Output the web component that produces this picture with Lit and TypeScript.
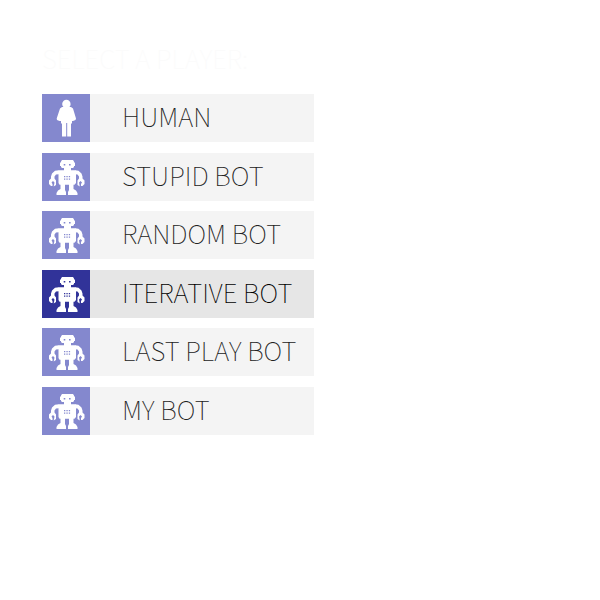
import { LitElement, html, css, svg } from "lit";
import { customElement, state } from "lit/decorators.js";

const human = svg`
  <ellipse cx="24.400" cy="10" rx="4.200" ry="4.300"/>
  <path d="M20 13H29L31 14.500L34 24.500L33.500 26L31 27H30V29.500H29V42.500H25.200V29H24.200V42.500H20V29.500H19V27H17.500L15 26L14.700 24.500L18 14.500Z"/>`;

const robot = svg`
  <path fill-rule="evenodd" d="M20 7H31L32 8.500V9.500H33V13H32V14L31 15H20L19 14V13H18V9.500H19V8.500ZM21.700 11V12.600H23.300V11ZM27 11V12.600H28.600V11Z"/>
  <path d="M22 14H29V18H22Z"/>
  <path fill-rule="evenodd" d="M17 17.200H33L34 18V30L32.500 31.700H17.500L16.500 30V18ZM22 23V24.300H23.300V23ZM24.400 23V24.300H25.700V23ZM26.800 23V24.300H28.100V23ZM22 25.400V26.700H23.300V25.400ZM24.400 25.400V26.700H25.700V25.400ZM26.800 25.400V26.700H28.100V25.400Z"/>
  <path d="M17 17.200L13 17.700L10 20.500L9 23.500V25.500L7 27.500V31L9 33H10.500V31L9.500 29.500L11 28L12.500 29.500L11.700 33.500L14 32V27.500L12.500 25.500V23.500L14 21.500L17 21.200Z"/>
  <path d="M33 17.200L36.500 17.700L39.500 20.500L40.500 23.500V25.500L42.500 27.500V31L40.500 33H39V31L40 29.500L38.500 28L37 29.500L37.800 33.500L35.500 32V27.500L37 25.500V23.500L35.500 21.500L33 21.200Z"/>
  <path d="M18.500 31H23V37L24 39V42H14.500V40L16 37.500L18.500 36ZM27 31H31.500V36L34 37.500L35.500 40V42H26V39L27 37Z"/>`;

interface Player {
  name: string;
  icon: unknown;
}

const players: Player[] = [
  { name: "HUMAN", icon: human },
  { name: "STUPID BOT", icon: robot },
  { name: "RANDOM BOT", icon: robot },
  { name: "ITERATIVE BOT", icon: robot },
  { name: "LAST PLAY BOT", icon: robot },
  { name: "MY BOT", icon: robot },
];

@customElement("app-root")
export class AppRoot extends LitElement {
  @state() private selected = 3;

  static styles = css`
    :host {
      display: block;
      box-sizing: border-box;
      min-height: 100vh;
      padding: 36px 42px;
      background: #fff;
      font-family: "Noto Sans CJK JP", "Noto Sans", sans-serif;
      font-weight: 100;
    }
    .title {
      margin: 0 0 14px;
      font-size: 26px;
      line-height: 44px;
      font-weight: 100;
      color: #fbfbfb;
    }
    .list {
      display: flex;
      flex-direction: column;
      justify-content: space-between;
      max-width: 272px;
      min-height: 341px;
      margin: 0;
      padding: 0;
      list-style: none;
    }
    .player {
      display: flex;
      width: 100%;
      height: 48px;
      padding: 0;
      border: 0;
      background: #f4f4f4;
      color: #222;
      font: inherit;
      font-size: 26px;
      line-height: 44px;
      text-align: left;
      white-space: nowrap;
      cursor: pointer;
    }
    .icon {
      flex: none;
      width: 48px;
      height: 48px;
      background: #8488ce;
      fill: #fff;
    }
    .name {
      padding-left: 32px;
    }
    .player.active {
      background: #e6e6e6;
      color: #000;
    }
    .active .icon {
      background: #313399;
    }
  `;

  render() {
    return html`
      <h1 class="title">SELECT A PLAYER:</h1>
      <ul class="list">
        ${players.map(
          (p, i) => html`<li>
            <button
              class="player ${i === this.selected ? "active" : ""}"
              aria-pressed=${i === this.selected}
              @click=${() => (this.selected = i)}
            >
              <svg class="icon" viewBox="0 0 48 48" aria-hidden="true">${p.icon}</svg>
              <span class="name">${p.name}</span>
            </button>
          </li>`
        )}
      </ul>
    `;
  }
}
